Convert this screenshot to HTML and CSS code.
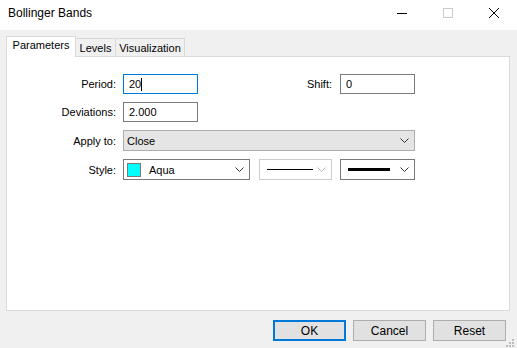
FILE: index.html
```html
<!DOCTYPE html>
<html lang="en">
<head>
    <meta charset="UTF-8">
    <title>Bollinger Bands</title>
    <link rel="stylesheet" href="styles.css">
</head>
<body>
    <div class="window">
        <div class="titlebar">
            <span class="title">Bollinger Bands</span>
            <div class="controls">
                <div class="ctl">
                    <svg width="10" height="10" viewBox="0 0 10 10"><path d="M0 5.5H10" stroke="#000" stroke-width="1"/></svg>
                </div>
                <div class="ctl">
                    <svg width="10" height="10" viewBox="0 0 10 10"><rect x="0.5" y="0.5" width="9" height="9" fill="none" stroke="#cccccc"/></svg>
                </div>
                <div class="ctl">
                    <svg width="10" height="10" viewBox="0 0 10 10"><path d="M0 0L10 10M10 0L0 10" stroke="#000" stroke-width="1"/></svg>
                </div>
            </div>
        </div>

        <div class="tabs">
            <div class="tab active tab-params">Parameters</div>
            <div class="tab tab-levels">Levels</div>
            <div class="tab tab-vis">Visualization</div>
        </div>

        <div class="panel">
            <div class="form">
                <label class="lbl">Period:</label>
                <div class="row">
                    <div class="input focus">20<span class="caret"></span></div>
                    <label class="lbl lbl-shift">Shift:</label>
                    <div class="input">0</div>
                </div>

                <label class="lbl">Deviations:</label>
                <div class="row">
                    <div class="input">2.000</div>
                </div>

                <label class="lbl">Apply to:</label>
                <div class="row">
                    <div class="select select-apply">
                        <span>Close</span>
                        <svg class="chev" width="9" height="5" viewBox="0 0 9 5"><path d="M0.5 0.5L4.5 4.5L8.5 0.5" fill="none" stroke="#333"/></svg>
                    </div>
                </div>

                <label class="lbl">Style:</label>
                <div class="row">
                    <div class="select select-color">
                        <span class="swatch"></span>
                        <span class="color-name">Aqua</span>
                        <svg class="chev" width="9" height="5" viewBox="0 0 9 5"><path d="M0.5 0.5L4.5 4.5L8.5 0.5" fill="none" stroke="#333"/></svg>
                    </div>
                    <div class="select select-line disabled">
                        <span class="line thin"></span>
                        <svg class="chev" width="9" height="5" viewBox="0 0 9 5"><path d="M0.5 0.5L4.5 4.5L8.5 0.5" fill="none" stroke="#bdbdbd"/></svg>
                    </div>
                    <div class="select select-width">
                        <span class="line thick"></span>
                        <svg class="chev" width="9" height="5" viewBox="0 0 9 5"><path d="M0.5 0.5L4.5 4.5L8.5 0.5" fill="none" stroke="#333"/></svg>
                    </div>
                </div>
            </div>
        </div>

        <div class="buttons">
            <button class="btn btn-default">OK</button>
            <button class="btn">Cancel</button>
            <button class="btn">Reset</button>
        </div>

        <svg class="grip" width="10" height="10" viewBox="0 0 10 10">
            <rect x="7" y="1" width="2" height="2" fill="#bcbcbc"/>
            <rect x="4" y="4" width="2" height="2" fill="#bcbcbc"/>
            <rect x="7" y="4" width="2" height="2" fill="#bcbcbc"/>
            <rect x="1" y="7" width="2" height="2" fill="#bcbcbc"/>
            <rect x="4" y="7" width="2" height="2" fill="#bcbcbc"/>
            <rect x="7" y="7" width="2" height="2" fill="#bcbcbc"/>
        </svg>
    </div>
</body>
</html>
```

FILE: styles.css
```css
body {
    margin: 0;
    font-family: 'Liberation Sans', Arial, sans-serif;
    font-size: 11px;
    color: #000;
    background: #f0f0f0;
}
.window {
    position: relative;
    width: 517px;
    height: 348px;
    background: #f0f0f0;
    overflow: hidden;
}
.titlebar {
    height: 30px;
    background: #fff;
    display: flex;
    align-items: center;
    justify-content: space-between;
}
.title {
    padding-left: 8px;
    font-size: 12px;
    margin-top: -4px;
}
.controls {
    display: flex;
    align-self: stretch;
}
.ctl {
    width: 46px;
    display: flex;
    align-items: center;
    justify-content: center;
    padding-bottom: 5px;
}
.ctl svg {
    display: block;
}
.tabs {
    display: flex;
    align-items: flex-end;
    margin: 6px 0 0 6px;
    height: 20px;
    position: relative;
    z-index: 1;
}
.tab {
    box-sizing: border-box;
    height: 18px;
    border: 1px solid #d9d9d9;
    border-bottom: none;
    background: #f0f0f0;
    text-align: center;
    line-height: 18px;
}
.tab + .tab {
    border-left: none;
}
.tab.active {
    height: 21px;
    background: #fff;
    line-height: 17px;
    margin-bottom: -1px;
}
.tab-params { width: 70px; }
.tab-levels { width: 40px; }
.tab-vis { width: 69px; }
.panel {
    box-sizing: border-box;
    margin: 0 7px 0 6px;
    height: 255px;
    background: #fff;
    border: 1px solid #d9d9d9;
    padding-top: 17px;
}
.form {
    display: grid;
    grid-template-columns: 109px 292px;
    column-gap: 7px;
    row-gap: 8px;
    align-items: center;
}
.lbl {
    text-align: right;
}
.row {
    display: flex;
    align-items: center;
}
.lbl-shift {
    width: 142px;
    padding-right: 8px;
    box-sizing: border-box;
}
.input {
    box-sizing: border-box;
    width: 75px;
    height: 20px;
    border: 1px solid #7a7a7a;
    background: #fff;
    padding-left: 5px;
    line-height: 18px;
    display: flex;
    align-items: center;
}
.input.focus {
    border-color: #0078d7;
}
.caret {
    display: inline-block;
    width: 1px;
    height: 13px;
    background: #000;
}
.select {
    box-sizing: border-box;
    height: 21px;
    border: 1px solid #7a7a7a;
    background: #fff;
    display: flex;
    align-items: center;
    padding: 0 5px 0 3px;
}
.select .chev {
    margin-left: auto;
    display: block;
}
.select-apply {
    width: 292px;
    background: #e5e5e5;
    border-color: #adadad;
}
.select-color {
    width: 127px;
    margin-right: 9px;
}
.swatch {
    width: 12px;
    height: 12px;
    background: #00ffff;
    border: 1px solid #7a7a7a;
    margin-right: 8px;
}
.select-line {
    width: 73px;
    margin-right: 8px;
    border-color: #cccccc;
}
.select-width {
    width: 75px;
}
.line {
    display: block;
    background: #000;
    margin-left: 4px;
}
.line.thin {
    width: 46px;
    height: 1px;
}
.line.thick {
    width: 42px;
    height: 3px;
}
.buttons {
    display: flex;
    justify-content: flex-end;
    gap: 7px;
    margin: 9px 11px 0 0;
}
.btn {
    box-sizing: border-box;
    width: 73px;
    height: 21px;
    background: #e1e1e1;
    border: 1px solid #adadad;
    font-family: inherit;
    font-size: 12px;
    padding: 0;
    color: #000;
}
.btn-default {
    border: 2px solid #0078d7;
}
.grip {
    position: absolute;
    right: 2px;
    bottom: 0;
}
```
